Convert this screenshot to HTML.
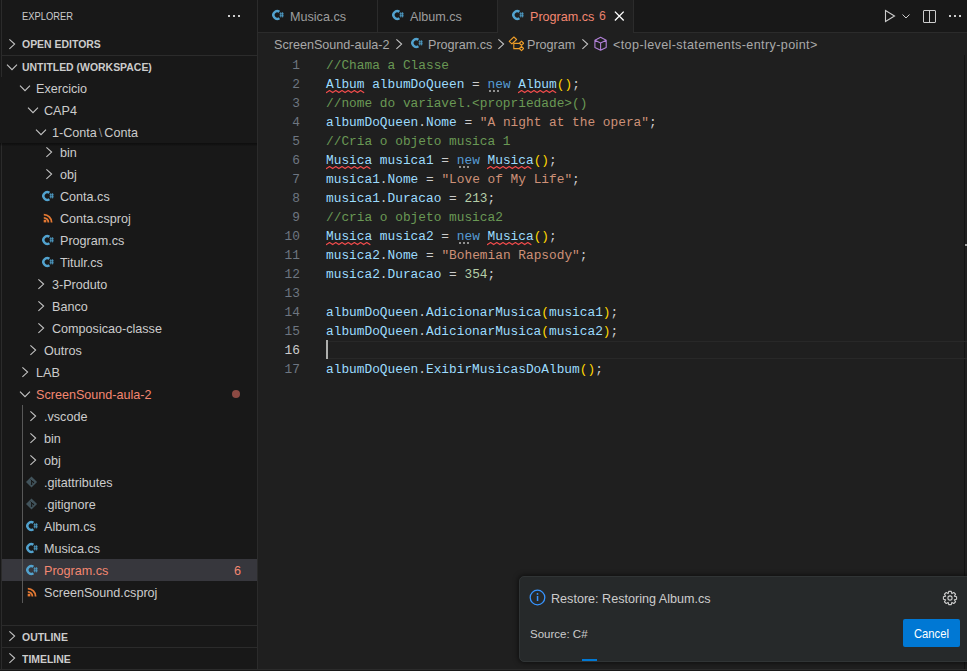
<!DOCTYPE html>
<html><head><meta charset="utf-8">
<style>
*{margin:0;padding:0;box-sizing:border-box}
html,body{width:967px;height:671px;overflow:hidden;background:#1f1f1f;font-family:"Liberation Sans",sans-serif;color:#cccccc}
.abs{position:absolute}
#side{position:absolute;left:0;top:0;width:257px;height:669px;background:#181818}
.vb{position:absolute;width:1px;background:#2b2b2b}
.hdr{position:absolute;left:22px;font-size:11px;white-space:nowrap;line-height:13px}
.sec{position:absolute;left:22px;transform:scaleX(.95);transform-origin:0 0;font-size:11px;font-weight:bold;white-space:nowrap;color:#cccccc;line-height:13px}
.row{position:absolute;left:2px;width:255px;height:22px;font-size:12.6px;line-height:22px;white-space:nowrap}
.row .t{position:absolute;top:0}
.ic{position:absolute}
.ic svg{display:block}
.hline{position:absolute;height:1px;background:#2b2b2b;margin-left:1px;width:255px!important}
.tab{position:absolute;top:1px;height:32px;font-size:12.6px;line-height:32px;white-space:nowrap;color:#9d9d9d}
.bc{position:absolute;top:34px;height:22px;font-size:12.6px;line-height:22px;white-space:nowrap;color:#a9a9a9}
#code{position:absolute;left:258px;top:0;width:709px;height:669px;font-family:"Liberation Mono",monospace;font-size:12.82px}
.ln{position:absolute;left:0;width:42px;text-align:right;height:19px;line-height:19px;padding-top:1px}
.cl{position:absolute;left:68px;height:19px;line-height:19px;padding-top:1px;white-space:pre;color:#cccccc}
.c{color:#6a9955}.v{color:#9cdcfe}.k{color:#569cd6}.s{color:#ce9178}.n{color:#b5cea8}.p{color:#ffd700}
.sq{}
.dot{}
#notif{position:absolute;left:519px;top:576px;width:460px;height:86px;background:#26292a;border:1px solid #303435;border-radius:5px;box-shadow:0 0 5px 1px rgba(0,0,0,.55)}
</style></head><body>
<div id="side"></div>
<div class="vb" style="left:1px;top:0;height:669px"></div>
<div class="vb" style="left:257px;top:0;height:669px"></div>

<div class="hdr" style="top:10px;transform:scaleX(.85);transform-origin:0 0">EXPLORER</div>
<div class="abs" style="left:228px;top:15px;width:2px;height:2px;background:#cccccc"></div><div class="abs" style="left:233px;top:15px;width:2px;height:2px;background:#cccccc"></div><div class="abs" style="left:238px;top:15px;width:2px;height:2px;background:#cccccc"></div>
<div class="row" style="top:33px">
 <div class="ic" style="left:2px;top:3px"><svg width="16" height="16" viewBox="0 0 16 16"><path d="M5.4 3.4L10.6 8.1 5.4 12.8" stroke="#c5c5c5" stroke-width="1.1" fill="none"/></svg></div>
</div>
<div class="sec" style="top:38px">OPEN EDITORS</div>
<div class="hline" style="left:1px;top:55px;width:256px"></div>
<div class="row" style="top:55px">
 <div class="ic" style="left:2px;top:4px"><svg width="16" height="16" viewBox="0 0 16 16"><path d="M3 5.7L8 10.7 13 5.7" stroke="#c5c5c5" stroke-width="1.1" fill="none"/></svg></div>
</div>
<div class="sec" style="top:61px">UNTITLED (WORKSPACE)</div>

<div class="row" style="top:141px;"><div class="ic" style="left:39px;top:3px;width:16px;height:16px"><svg width="16" height="16" viewBox="0 0 16 16"><path d="M5.4 3.4L10.6 8.1 5.4 12.8" stroke="#c5c5c5" stroke-width="1.1" fill="none"/></svg></div><div class="t" style="left:58px;top:1px;color:#cccccc">bin</div></div><div class="row" style="top:163px;"><div class="ic" style="left:39px;top:3px;width:16px;height:16px"><svg width="16" height="16" viewBox="0 0 16 16"><path d="M5.4 3.4L10.6 8.1 5.4 12.8" stroke="#c5c5c5" stroke-width="1.1" fill="none"/></svg></div><div class="t" style="left:58px;top:1px;color:#cccccc">obj</div></div><div class="row" style="top:185px;"><div class="ic" style="left:40px;top:5px;width:12px;height:12px"><svg width="12" height="12" viewBox="0 0 12 12"><path d="M7.4 2.8A3.85 3.85 0 1 0 7.4 9.2" stroke="#52a3cf" stroke-width="2.5" fill="none"/><path d="M8.8 3.2v5.2M10.6 3.2v5.2M7.6 4.8h4.1M7.6 6.8h4.1" stroke="#52a3cf" stroke-width=".85"/></svg></div><div class="t" style="left:58px;top:1px;color:#cccccc">Conta.cs</div></div><div class="row" style="top:207px;"><div class="ic" style="left:40px;top:5px;width:12px;height:12px"><svg width="12" height="12" viewBox="0 0 12 12"><rect x="1.7" y="7.8" width="2.6" height="2.6" fill="#e37933"/><path d="M1.8 5.8A4.6 4.6 0 0 1 6.4 10.4" stroke="#e37933" stroke-width="1.8" fill="none"/><path d="M1.8 2.6A7.8 7.8 0 0 1 9.6 10.4" stroke="#e37933" stroke-width="1.8" fill="none"/></svg></div><div class="t" style="left:58px;top:1px;color:#cccccc">Conta.csproj</div></div><div class="row" style="top:229px;"><div class="ic" style="left:40px;top:5px;width:12px;height:12px"><svg width="12" height="12" viewBox="0 0 12 12"><path d="M7.4 2.8A3.85 3.85 0 1 0 7.4 9.2" stroke="#52a3cf" stroke-width="2.5" fill="none"/><path d="M8.8 3.2v5.2M10.6 3.2v5.2M7.6 4.8h4.1M7.6 6.8h4.1" stroke="#52a3cf" stroke-width=".85"/></svg></div><div class="t" style="left:58px;top:1px;color:#cccccc">Program.cs</div></div><div class="row" style="top:251px;"><div class="ic" style="left:40px;top:5px;width:12px;height:12px"><svg width="12" height="12" viewBox="0 0 12 12"><path d="M7.4 2.8A3.85 3.85 0 1 0 7.4 9.2" stroke="#52a3cf" stroke-width="2.5" fill="none"/><path d="M8.8 3.2v5.2M10.6 3.2v5.2M7.6 4.8h4.1M7.6 6.8h4.1" stroke="#52a3cf" stroke-width=".85"/></svg></div><div class="t" style="left:58px;top:1px;color:#cccccc">Titulr.cs</div></div><div class="row" style="top:273px;"><div class="ic" style="left:31px;top:3px;width:16px;height:16px"><svg width="16" height="16" viewBox="0 0 16 16"><path d="M5.4 3.4L10.6 8.1 5.4 12.8" stroke="#c5c5c5" stroke-width="1.1" fill="none"/></svg></div><div class="t" style="left:50px;top:1px;color:#cccccc">3-Produto</div></div><div class="row" style="top:295px;"><div class="ic" style="left:31px;top:3px;width:16px;height:16px"><svg width="16" height="16" viewBox="0 0 16 16"><path d="M5.4 3.4L10.6 8.1 5.4 12.8" stroke="#c5c5c5" stroke-width="1.1" fill="none"/></svg></div><div class="t" style="left:50px;top:1px;color:#cccccc">Banco</div></div><div class="row" style="top:317px;"><div class="ic" style="left:31px;top:3px;width:16px;height:16px"><svg width="16" height="16" viewBox="0 0 16 16"><path d="M5.4 3.4L10.6 8.1 5.4 12.8" stroke="#c5c5c5" stroke-width="1.1" fill="none"/></svg></div><div class="t" style="left:50px;top:1px;color:#cccccc">Composicao-classe</div></div><div class="row" style="top:339px;"><div class="ic" style="left:23px;top:3px;width:16px;height:16px"><svg width="16" height="16" viewBox="0 0 16 16"><path d="M5.4 3.4L10.6 8.1 5.4 12.8" stroke="#c5c5c5" stroke-width="1.1" fill="none"/></svg></div><div class="t" style="left:42px;top:1px;color:#cccccc">Outros</div></div><div class="row" style="top:361px;"><div class="ic" style="left:15px;top:3px;width:16px;height:16px"><svg width="16" height="16" viewBox="0 0 16 16"><path d="M5.4 3.4L10.6 8.1 5.4 12.8" stroke="#c5c5c5" stroke-width="1.1" fill="none"/></svg></div><div class="t" style="left:34px;top:1px;color:#cccccc">LAB</div></div><div class="row" style="top:383px;"><div class="ic" style="left:15px;top:3px;width:16px;height:16px"><svg width="16" height="16" viewBox="0 0 16 16"><path d="M3 5.7L8 10.7 13 5.7" stroke="#c5c5c5" stroke-width="1.1" fill="none"/></svg></div><div class="t" style="left:34px;top:1px;color:#f48771">ScreenSound-aula-2</div></div><div class="row" style="top:405px;"><div class="ic" style="left:23px;top:3px;width:16px;height:16px"><svg width="16" height="16" viewBox="0 0 16 16"><path d="M5.4 3.4L10.6 8.1 5.4 12.8" stroke="#c5c5c5" stroke-width="1.1" fill="none"/></svg></div><div class="t" style="left:42px;top:1px;color:#cccccc">.vscode</div></div><div class="row" style="top:427px;"><div class="ic" style="left:23px;top:3px;width:16px;height:16px"><svg width="16" height="16" viewBox="0 0 16 16"><path d="M5.4 3.4L10.6 8.1 5.4 12.8" stroke="#c5c5c5" stroke-width="1.1" fill="none"/></svg></div><div class="t" style="left:42px;top:1px;color:#cccccc">bin</div></div><div class="row" style="top:449px;"><div class="ic" style="left:23px;top:3px;width:16px;height:16px"><svg width="16" height="16" viewBox="0 0 16 16"><path d="M5.4 3.4L10.6 8.1 5.4 12.8" stroke="#c5c5c5" stroke-width="1.1" fill="none"/></svg></div><div class="t" style="left:42px;top:1px;color:#cccccc">obj</div></div><div class="row" style="top:471px;"><div class="ic" style="left:24px;top:5px;width:12px;height:12px"><svg width="12" height="12" viewBox="0 0 12 12"><path d="M5.5 0.4L11.1 6 5.5 11.6-0.1 6z" fill="#41535b"/><path d="M4.6 3.6L7.4 6.4M5.6 4.4v3.6" stroke="#181818" stroke-width="1"/><circle cx="5.6" cy="8.2" r=".8" fill="#181818"/><circle cx="7.4" cy="6.4" r=".8" fill="#181818"/></svg></div><div class="t" style="left:42px;top:1px;color:#cccccc">.gitattributes</div></div><div class="row" style="top:493px;"><div class="ic" style="left:24px;top:5px;width:12px;height:12px"><svg width="12" height="12" viewBox="0 0 12 12"><path d="M5.5 0.4L11.1 6 5.5 11.6-0.1 6z" fill="#41535b"/><path d="M4.6 3.6L7.4 6.4M5.6 4.4v3.6" stroke="#181818" stroke-width="1"/><circle cx="5.6" cy="8.2" r=".8" fill="#181818"/><circle cx="7.4" cy="6.4" r=".8" fill="#181818"/></svg></div><div class="t" style="left:42px;top:1px;color:#cccccc">.gitignore</div></div><div class="row" style="top:515px;"><div class="ic" style="left:24px;top:5px;width:12px;height:12px"><svg width="12" height="12" viewBox="0 0 12 12"><path d="M7.4 2.8A3.85 3.85 0 1 0 7.4 9.2" stroke="#52a3cf" stroke-width="2.5" fill="none"/><path d="M8.8 3.2v5.2M10.6 3.2v5.2M7.6 4.8h4.1M7.6 6.8h4.1" stroke="#52a3cf" stroke-width=".85"/></svg></div><div class="t" style="left:42px;top:1px;color:#cccccc">Album.cs</div></div><div class="row" style="top:537px;"><div class="ic" style="left:24px;top:5px;width:12px;height:12px"><svg width="12" height="12" viewBox="0 0 12 12"><path d="M7.4 2.8A3.85 3.85 0 1 0 7.4 9.2" stroke="#52a3cf" stroke-width="2.5" fill="none"/><path d="M8.8 3.2v5.2M10.6 3.2v5.2M7.6 4.8h4.1M7.6 6.8h4.1" stroke="#52a3cf" stroke-width=".85"/></svg></div><div class="t" style="left:42px;top:1px;color:#cccccc">Musica.cs</div></div><div class="row" style="top:559px;background:#37373d;"><div class="ic" style="left:24px;top:5px;width:12px;height:12px"><svg width="12" height="12" viewBox="0 0 12 12"><path d="M7.4 2.8A3.85 3.85 0 1 0 7.4 9.2" stroke="#52a3cf" stroke-width="2.5" fill="none"/><path d="M8.8 3.2v5.2M10.6 3.2v5.2M7.6 4.8h4.1M7.6 6.8h4.1" stroke="#52a3cf" stroke-width=".85"/></svg></div><div class="t" style="left:42px;top:1px;color:#f48771">Program.cs</div><div class="t" style="left:232px;top:1px;color:#f48771">6</div></div><div class="row" style="top:581px;"><div class="ic" style="left:24px;top:5px;width:12px;height:12px"><svg width="12" height="12" viewBox="0 0 12 12"><rect x="1.7" y="7.8" width="2.6" height="2.6" fill="#e37933"/><path d="M1.8 5.8A4.6 4.6 0 0 1 6.4 10.4" stroke="#e37933" stroke-width="1.8" fill="none"/><path d="M1.8 2.6A7.8 7.8 0 0 1 9.6 10.4" stroke="#e37933" stroke-width="1.8" fill="none"/></svg></div><div class="t" style="left:42px;top:1px;color:#cccccc">ScreenSound.csproj</div></div><div class="abs" style="left:232px;top:390px;width:8px;height:8px;border-radius:50%;background:#8c4a43"></div><div class="abs" style="left:22px;top:405px;width:1px;height:198px;background:#585858"></div>
<div class="abs" style="left:0px;top:77px;width:257px;height:66px;background:#181818"><div class="row" style="top:0px;"><div class="ic" style="left:15px;top:3px;width:16px;height:16px"><svg width="16" height="16" viewBox="0 0 16 16"><path d="M3 5.7L8 10.7 13 5.7" stroke="#c5c5c5" stroke-width="1.1" fill="none"/></svg></div><div class="t" style="left:34px;top:1px;color:#cccccc">Exercicio</div></div><div class="row" style="top:22px;"><div class="ic" style="left:23px;top:3px;width:16px;height:16px"><svg width="16" height="16" viewBox="0 0 16 16"><path d="M3 5.7L8 10.7 13 5.7" stroke="#c5c5c5" stroke-width="1.1" fill="none"/></svg></div><div class="t" style="left:42px;top:1px;color:#cccccc">CAP4</div></div><div class="row" style="top:44px;"><div class="ic" style="left:31px;top:3px;width:16px;height:16px"><svg width="16" height="16" viewBox="0 0 16 16"><path d="M3 5.7L8 10.7 13 5.7" stroke="#c5c5c5" stroke-width="1.1" fill="none"/></svg></div><div class="t" style="left:50px;top:1px;color:#cccccc">1-Conta<span style="color:#8b8b8b;padding:0 2px">\</span>Conta</div></div></div><div class="abs" style="left:0;top:143px;width:257px;height:3px;background:linear-gradient(rgba(0,0,0,.42),rgba(0,0,0,.25) 60%,rgba(0,0,0,0.05))"></div>

<div class="hline" style="left:1px;top:625px;width:256px"></div>
<div class="row" style="top:625px"><div class="ic" style="left:2px;top:3px"><svg width="16" height="16" viewBox="0 0 16 16"><path d="M5.4 3.4L10.6 8.1 5.4 12.8" stroke="#c5c5c5" stroke-width="1.1" fill="none"/></svg></div></div>
<div class="sec" style="top:631px">OUTLINE</div>
<div class="hline" style="left:1px;top:647px;width:256px"></div>
<div class="row" style="top:647px"><div class="ic" style="left:2px;top:3px"><svg width="16" height="16" viewBox="0 0 16 16"><path d="M5.4 3.4L10.6 8.1 5.4 12.8" stroke="#c5c5c5" stroke-width="1.1" fill="none"/></svg></div></div>
<div class="sec" style="top:653px">TIMELINE</div>

<div class="abs" style="left:0;top:669px;width:967px;height:1px;background:#2b2b2b"></div>
<div class="abs" style="left:0;top:670px;width:967px;height:1px;background:#181818"></div>

<!-- tabs -->
<div class="abs" style="left:258px;top:0;width:709px;height:32px;background:#181818"></div>
<div class="abs" style="left:258px;top:32px;width:709px;height:1px;background:#2b2b2b"></div>
<div class="vb" style="left:377px;top:0;height:32px"></div>
<div class="vb" style="left:497px;top:0;height:32px"></div>
<div class="abs" style="left:498px;top:0;width:135px;height:33px;background:#1f1f1f"></div>
<div class="vb" style="left:633px;top:0;height:32px"></div>
<div class="ic" style="left:272px;top:9px"><svg width="12" height="12" viewBox="0 0 12 12"><path d="M7.4 2.8A3.85 3.85 0 1 0 7.4 9.2" stroke="#52a3cf" stroke-width="2.5" fill="none"/><path d="M8.8 3.2v5.2M10.6 3.2v5.2M7.6 4.8h4.1M7.6 6.8h4.1" stroke="#52a3cf" stroke-width=".85"/></svg></div>
<div class="tab" style="left:290px">Musica.cs</div>
<div class="ic" style="left:392px;top:9px"><svg width="12" height="12" viewBox="0 0 12 12"><path d="M7.4 2.8A3.85 3.85 0 1 0 7.4 9.2" stroke="#52a3cf" stroke-width="2.5" fill="none"/><path d="M8.8 3.2v5.2M10.6 3.2v5.2M7.6 4.8h4.1M7.6 6.8h4.1" stroke="#52a3cf" stroke-width=".85"/></svg></div>
<div class="tab" style="left:410px">Album.cs</div>
<div class="ic" style="left:512px;top:9px"><svg width="12" height="12" viewBox="0 0 12 12"><path d="M7.4 2.8A3.85 3.85 0 1 0 7.4 9.2" stroke="#52a3cf" stroke-width="2.5" fill="none"/><path d="M8.8 3.2v5.2M10.6 3.2v5.2M7.6 4.8h4.1M7.6 6.8h4.1" stroke="#52a3cf" stroke-width=".85"/></svg></div>
<div class="tab" style="left:530px;color:#f48771">Program.cs</div>
<div class="tab" style="left:599px;top:0;color:#e8806c;font-size:12.2px">6</div>
<div class="ic" style="left:612px;top:9px"><svg width="14" height="14" viewBox="0 0 14 14"><path d="M2.9 2.6l8.8 8.9M11.7 2.6l-8.8 8.9" stroke="#ffffff" stroke-width="1.35"/></svg></div>

<div class="ic" style="left:882px;top:8px"><svg width="16" height="16" viewBox="0 0 16 16"><path d="M3.5 2.5v11l9-5.5z" stroke="#cccccc" stroke-width="1.1" fill="none" stroke-linejoin="miter"/></svg></div>
<div class="ic" style="left:900px;top:8px"><svg width="12" height="16" viewBox="0 0 12 16"><path d="M2.5 6.5L6 10l3.5-3.5" stroke="#cccccc" stroke-width="1" fill="none"/></svg></div>
<div class="ic" style="left:921px;top:8px"><svg width="17" height="17" viewBox="0 0 17 17"><rect x="2.5" y="2.5" width="12" height="12" stroke="#cccccc" stroke-width="1" fill="none" rx=".5"/><path d="M8.5 2.5v12" stroke="#cccccc" stroke-width="1"/></svg></div>
<div class="abs" style="left:949px;top:15px;width:2px;height:2px;background:#cccccc"></div><div class="abs" style="left:954px;top:15px;width:2px;height:2px;background:#cccccc"></div><div class="abs" style="left:959px;top:15px;width:2px;height:2px;background:#cccccc"></div>

<!-- breadcrumbs -->
<div class="bc" style="left:274px">ScreenSound-aula-2</div>
<div class="ic" style="left:391px;top:36px"><svg width="16" height="16" viewBox="0 0 16 16"><path d="M5.4 3.4L10.6 8.1 5.4 12.8" stroke="#c5c5c5" stroke-width="1.1" fill="none"/></svg></div>
<div class="ic" style="left:411px;top:37px"><svg width="12" height="12" viewBox="0 0 12 12"><path d="M7.4 2.8A3.85 3.85 0 1 0 7.4 9.2" stroke="#52a3cf" stroke-width="2.5" fill="none"/><path d="M8.8 3.2v5.2M10.6 3.2v5.2M7.6 4.8h4.1M7.6 6.8h4.1" stroke="#52a3cf" stroke-width=".85"/></svg></div>
<div class="bc" style="left:428px">Program.cs</div>
<div class="ic" style="left:493px;top:36px"><svg width="16" height="16" viewBox="0 0 16 16"><path d="M5.4 3.4L10.6 8.1 5.4 12.8" stroke="#c5c5c5" stroke-width="1.1" fill="none"/></svg></div>
<div class="ic" style="left:506px;top:34px"><svg width="18" height="18" viewBox="0 0 18 18"><path d="M3.2 7.3L7.9 3 10.6 5.5 5.9 9.8z" stroke="#ee9d28" stroke-width="1.1" fill="none" stroke-linejoin="round"/><path d="M7.8 8.6V14.6H13.4M7.8 9.4H13.4" stroke="#ee9d28" stroke-width="1.1" fill="none"/><path d="M15.5 7.1L17.6 9.25 15.5 11.4 13.4 9.25z M15.5 12.4L17.6 14.5 15.5 16.6 13.4 14.5z" stroke="#ee9d28" stroke-width="1.1" fill="none" stroke-linejoin="round"/></svg></div>
<div class="bc" style="left:527px">Program</div>
<div class="ic" style="left:577px;top:36px"><svg width="16" height="16" viewBox="0 0 16 16"><path d="M5.4 3.4L10.6 8.1 5.4 12.8" stroke="#c5c5c5" stroke-width="1.1" fill="none"/></svg></div>
<div class="ic" style="left:590px;top:34px"><svg width="20" height="20" viewBox="0 0 20 20"><path d="M10.6 3.3L16.2 6.3V13.4L10.6 16.2 4.9 13.4V6.3z M4.9 6.3L10.6 9 16.2 6.3 M10.6 9V16.2" stroke="#b180d7" stroke-width="1.1" fill="none" stroke-linejoin="round"/></svg></div>
<div class="bc" style="left:613px;letter-spacing:.38px">&lt;top-level-statements-entry-point&gt;</div>

<div class="abs" style="left:964px;top:55px;width:1px;height:614px;background:#141414"></div>
<div id="code">
<svg class="abs" style="left:67.50px;top:90px" width="39" height="4" viewBox="-0.5 0 39 4"><polyline points="0.00,2.6 3.10,0.6 6.20,2.6 9.30,0.6 12.40,2.6 15.50,0.6 18.60,2.6 21.70,0.6 24.80,2.6 27.90,0.6 31.00,2.6 34.10,0.6 37.20,2.6" stroke="#f14c4c" stroke-width="1.2" fill="none" stroke-linejoin="round" stroke-linecap="round"/></svg><svg class="abs" style="left:259.75px;top:90px" width="39" height="4" viewBox="-0.5 0 39 4"><polyline points="0.00,2.6 3.10,0.6 6.20,2.6 9.30,0.6 12.40,2.6 15.50,0.6 18.60,2.6 21.70,0.6 24.80,2.6 27.90,0.6 31.00,2.6 34.10,0.6 37.20,2.6" stroke="#f14c4c" stroke-width="1.2" fill="none" stroke-linejoin="round" stroke-linecap="round"/></svg><div class="abs" style="left:231px;top:90px;width:2px;height:2px;background:#8f8f8f"></div><div class="abs" style="left:235px;top:90px;width:2px;height:2px;background:#8f8f8f"></div><div class="abs" style="left:239px;top:90px;width:2px;height:2px;background:#8f8f8f"></div><svg class="abs" style="left:67.50px;top:166px" width="47" height="4" viewBox="-0.5 0 47 4"><polyline points="0.00,2.6 3.10,0.6 6.20,2.6 9.30,0.6 12.40,2.6 15.50,0.6 18.60,2.6 21.70,0.6 24.80,2.6 27.90,0.6 31.00,2.6 34.10,0.6 37.20,2.6 40.30,0.6 43.40,2.6" stroke="#f14c4c" stroke-width="1.2" fill="none" stroke-linejoin="round" stroke-linecap="round"/></svg><svg class="abs" style="left:228.99px;top:166px" width="47" height="4" viewBox="-0.5 0 47 4"><polyline points="0.00,2.6 3.10,0.6 6.20,2.6 9.30,0.6 12.40,2.6 15.50,0.6 18.60,2.6 21.70,0.6 24.80,2.6 27.90,0.6 31.00,2.6 34.10,0.6 37.20,2.6 40.30,0.6 43.40,2.6" stroke="#f14c4c" stroke-width="1.2" fill="none" stroke-linejoin="round" stroke-linecap="round"/></svg><div class="abs" style="left:201px;top:166px;width:2px;height:2px;background:#8f8f8f"></div><div class="abs" style="left:205px;top:166px;width:2px;height:2px;background:#8f8f8f"></div><div class="abs" style="left:209px;top:166px;width:2px;height:2px;background:#8f8f8f"></div><svg class="abs" style="left:67.50px;top:242px" width="47" height="4" viewBox="-0.5 0 47 4"><polyline points="0.00,2.6 3.10,0.6 6.20,2.6 9.30,0.6 12.40,2.6 15.50,0.6 18.60,2.6 21.70,0.6 24.80,2.6 27.90,0.6 31.00,2.6 34.10,0.6 37.20,2.6 40.30,0.6 43.40,2.6" stroke="#f14c4c" stroke-width="1.2" fill="none" stroke-linejoin="round" stroke-linecap="round"/></svg><svg class="abs" style="left:228.99px;top:242px" width="47" height="4" viewBox="-0.5 0 47 4"><polyline points="0.00,2.6 3.10,0.6 6.20,2.6 9.30,0.6 12.40,2.6 15.50,0.6 18.60,2.6 21.70,0.6 24.80,2.6 27.90,0.6 31.00,2.6 34.10,0.6 37.20,2.6 40.30,0.6 43.40,2.6" stroke="#f14c4c" stroke-width="1.2" fill="none" stroke-linejoin="round" stroke-linecap="round"/></svg><div class="abs" style="left:201px;top:242px;width:2px;height:2px;background:#8f8f8f"></div><div class="abs" style="left:205px;top:242px;width:2px;height:2px;background:#8f8f8f"></div><div class="abs" style="left:209px;top:242px;width:2px;height:2px;background:#8f8f8f"></div><div class="ln" style="top:55px;color:#6e7681">1</div><div class="cl" style="top:55px"><span class="c">//Chama a Classe</span></div><div class="ln" style="top:74px;color:#6e7681">2</div><div class="cl" style="top:74px"><span class="v sq">Album</span> <span class="v">albumDoQueen</span> = <span class="k dot">new</span> <span class="v sq">Album</span><span class="p">()</span>;</div><div class="ln" style="top:93px;color:#6e7681">3</div><div class="cl" style="top:93px"><span class="c">//nome do variavel.&lt;propriedade&gt;()</span></div><div class="ln" style="top:112px;color:#6e7681">4</div><div class="cl" style="top:112px"><span class="v">albumDoQueen</span>.<span class="v">Nome</span> = <span class="s">"A night at the opera"</span>;</div><div class="ln" style="top:131px;color:#6e7681">5</div><div class="cl" style="top:131px"><span class="c">//Cria o objeto musica 1</span></div><div class="ln" style="top:150px;color:#6e7681">6</div><div class="cl" style="top:150px"><span class="v sq">Musica</span> <span class="v">musica1</span> = <span class="k dot">new</span> <span class="v sq">Musica</span><span class="p">()</span>;</div><div class="ln" style="top:169px;color:#6e7681">7</div><div class="cl" style="top:169px"><span class="v">musica1</span>.<span class="v">Nome</span> = <span class="s">"Love of My Life"</span>;</div><div class="ln" style="top:188px;color:#6e7681">8</div><div class="cl" style="top:188px"><span class="v">musica1</span>.<span class="v">Duracao</span> = <span class="n">213</span>;</div><div class="ln" style="top:207px;color:#6e7681">9</div><div class="cl" style="top:207px"><span class="c">//cria o objeto musica2</span></div><div class="ln" style="top:226px;color:#6e7681">10</div><div class="cl" style="top:226px"><span class="v sq">Musica</span> <span class="v">musica2</span> = <span class="k dot">new</span> <span class="v sq">Musica</span><span class="p">()</span>;</div><div class="ln" style="top:245px;color:#6e7681">11</div><div class="cl" style="top:245px"><span class="v">musica2</span>.<span class="v">Nome</span> = <span class="s">"Bohemian Rapsody"</span>;</div><div class="ln" style="top:264px;color:#6e7681">12</div><div class="cl" style="top:264px"><span class="v">musica2</span>.<span class="v">Duracao</span> = <span class="n">354</span>;</div><div class="ln" style="top:283px;color:#6e7681">13</div><div class="cl" style="top:283px"></div><div class="ln" style="top:302px;color:#6e7681">14</div><div class="cl" style="top:302px"><span class="v">albumDoQueen</span>.<span class="v">AdicionarMusica</span><span class="p">(</span><span class="v">musica1</span><span class="p">)</span>;</div><div class="ln" style="top:321px;color:#6e7681">15</div><div class="cl" style="top:321px"><span class="v">albumDoQueen</span>.<span class="v">AdicionarMusica</span><span class="p">(</span><span class="v">musica2</span><span class="p">)</span>;</div><div class="ln" style="top:340px;color:#cccccc">16</div><div class="cl" style="top:340px"></div><div class="ln" style="top:359px;color:#6e7681">17</div><div class="cl" style="top:359px"><span class="v">albumDoQueen</span>.<span class="v">ExibirMusicasDoAlbum</span><span class="p">()</span>;</div><div class="abs" style="left:68px;top:341px;width:641px;height:18px;border-top:1px solid #282828;border-bottom:1px solid #282828"></div><div class="abs" style="left:68px;top:340px;width:2px;height:19px;background:#aeafad"></div>
</div>
<div class="abs" style="left:965px;top:244px;width:2px;height:2px;background:#a0a0a0"></div>

<div id="notif">
 <div class="ic" style="left:9px;top:12px"><svg width="17" height="17" viewBox="0 0 17 17"><circle cx="8.5" cy="8.5" r="7.3" stroke="#3794ff" stroke-width="1.3" fill="none"/><rect x="7.8" y="7" width="1.5" height="5" fill="#3794ff"/><circle cx="8.5" cy="4.9" r=".9" fill="#3794ff"/></svg></div>
 <div class="abs" style="left:31px;top:14px;font-size:12.6px;line-height:16px;white-space:nowrap">Restore: Restoring Album.cs</div>
 <div class="ic" style="left:421px;top:12px"><svg width="18" height="18" viewBox="0 0 18 18"><path d="M13.45 7.20 L15.58 7.72 L15.58 10.28 L13.45 10.80 L13.42 10.88 L14.55 12.75 L12.75 14.55 L10.88 13.42 L10.80 13.45 L10.28 15.58 L7.72 15.58 L7.20 13.45 L7.12 13.42 L5.25 14.55 L3.45 12.75 L4.58 10.88 L4.55 10.80 L2.42 10.28 L2.42 7.72 L4.55 7.20 L4.58 7.12 L3.45 5.25 L5.25 3.45 L7.12 4.58 L7.20 4.55 L7.72 2.42 L10.28 2.42 L10.80 4.55 L10.88 4.58 L12.75 3.45 L14.55 5.25 L13.42 7.12Z" stroke="#cccccc" stroke-width="1.1" fill="none" stroke-linejoin="round"/><circle cx="9" cy="9" r="2.1" stroke="#cccccc" stroke-width="1.1" fill="none"/></svg></div>
 <div class="abs" style="left:10px;top:50px;font-size:11.5px;line-height:14px;white-space:nowrap">Source: C#</div>
 <div class="abs" style="left:383px;top:42px;width:57px;height:28px;background:#0078d4;border-radius:2px"></div><div class="abs" style="left:394px;top:43px;color:#fff;font-size:12.6px;line-height:28px;white-space:nowrap;transform:scaleX(.89);transform-origin:0 0">Cancel</div>
 <div class="abs" style="left:62px;top:82px;width:15px;height:2px;background:#0078d4"></div>
</div>
</body></html>
